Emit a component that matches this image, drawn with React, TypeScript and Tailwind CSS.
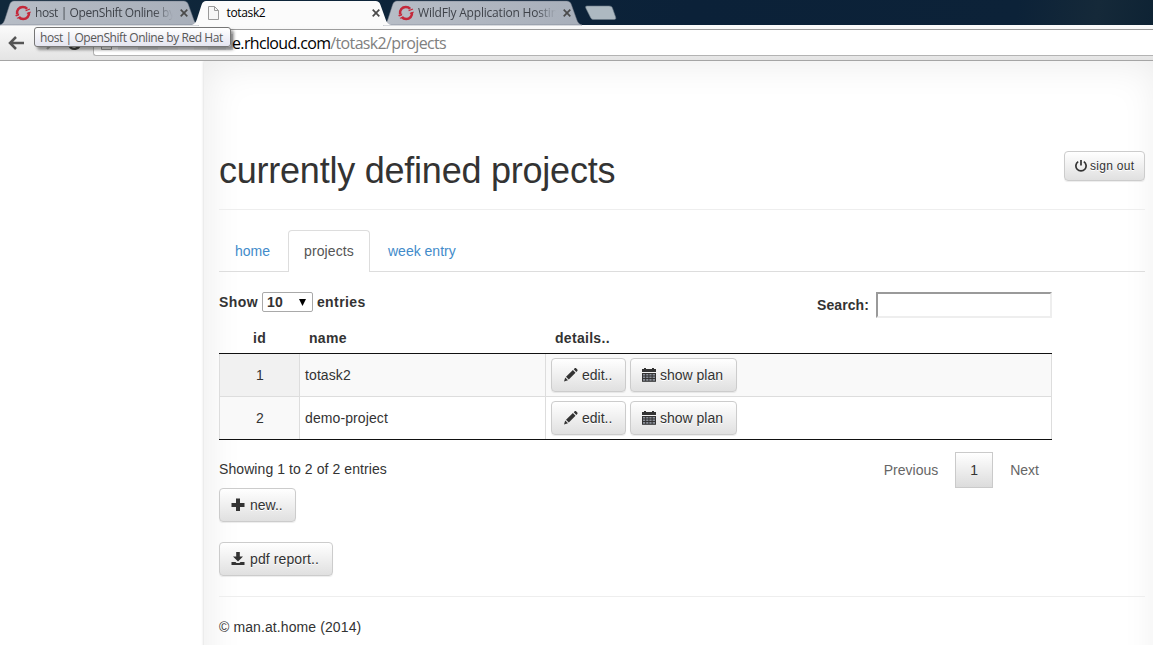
import type { ReactNode } from 'react';

const openShiftIcon = (
  <svg width="16" height="16" viewBox="0 0 16 16" fill="none" stroke="#c4283a" strokeWidth="2.600">
    <path d="M2.100 9.200C1.400 5 4.200 2 7.800 2c1.900 0 3.300.7 4.300 1.900" />
    <path d="M13.900 7.200c.6 3.800-2.200 6.800-5.700 6.800-1.900 0-3.400-.7-4.400-2" />
    <path d="M.2 10.200 4.200 8.600 4 10.400 1 11.600zM10.400 5.200l4.200-1.800.6 1-4.400 1.900zM11.800 8l3.800-1.500.2 1L12 9zM1.600 12.900l3.600-1.500.7.800-3.500 1.600z" fill="#c4283a" stroke="none" />
  </svg>
);

const pageIcon = (
  <svg width="13" height="16" viewBox="0 0 13 16">
    <path d="M1.500 1.500h6l4 4v9h-10z" fill="#f6f6f6" stroke="#9a9a9a" />
    <path d="M7.500 1.500v4h4" fill="none" stroke="#9a9a9a" />
  </svg>
);

type TabProps = { icon: ReactNode; title: string; active?: boolean; tracking: string };

function BrowserTab({ icon, title, active, tracking }: TabProps) {
  return (
    <div className={`relative h-[25px] w-[191.5px] shrink-0 ${active ? 'z-10' : ''}`}>
      <svg className="absolute left-0 top-0" width="206" height="25" viewBox="0 0 206 25" overflow="visible">
        <defs>
          <linearGradient id="idleTab" x1="0" y1="0" x2="1" y2="0">
            <stop offset="0" stopColor="#b7bdc6" />
            <stop offset="1" stopColor="#a8afba" />
          </linearGradient>
        </defs>
        <path
          d="M0 25C3 24 4 22 5 19L9.500 5C10.500 2 12 1 14 1H183.500C186 1 187.500 2 188.500 5L193.500 19C194.500 22 196 24.500 199 25Z"
          fill={active ? '#fbfbfb' : 'url(#idleTab)'}
          stroke={active ? 'none' : '#6f7784'}
          strokeWidth="0.5"
        />
      </svg>
      <div className="relative flex h-[25px] items-center pl-[15px] pt-px">
        <span className="flex w-[20px] shrink-0">{icon}</span>
        <span
          className={`w-[138px] whitespace-nowrap text-[12px] leading-[20px] ${tracking} ${
            active ? 'text-black' : 'text-[#3f434a] [mask-image:linear-gradient(to_right,black_86%,transparent)]'
          }`}
        >
          {title}
        </span>
        <svg className="ml-[7px]" width="8" height="8" viewBox="0 0 8 8" stroke="#4a4a4a" strokeWidth="1.700">
          <path d="M.7.7l6.600 6.600M7.300.7.7 7.300" />
        </svg>
      </div>
    </div>
  );
}

function Browser() {
  return (
    <header className="relative h-[61px] w-full font-['Open_Sans','Noto_Sans',sans-serif]">
      <div className="flex h-[25px] bg-[linear-gradient(100deg,#10283b,#0b2138_60%,#0c2238_88%,#152939_95%,#0e2334)]">
        <BrowserTab icon={openShiftIcon} title="host | OpenShift Online by" tracking="tracking-[-0.4px]" />
        <BrowserTab icon={pageIcon} title="totask2" active tracking="tracking-[-0.35px]" />
        <BrowserTab icon={openShiftIcon} title="WildFly Application Hostin" tracking="tracking-[-0.2px]" />
        <svg className="ml-[9px] mt-[5px]" width="34" height="16" viewBox="0 0 34 16">
          <path d="M3 1h22c2 0 3 .8 3.600 2.400l3 8.600c.6 1.800 0 2.500-1.600 2.500H10c-2 0-3-.8-3.600-2.300L2 3.500C1.300 1.700 1.600 1 3 1z" fill="#adb9c1" stroke="#6c7a86" strokeWidth=".6" />
        </svg>
      </div>
      <div className="flex h-[36px] border-b border-[#a5a5a5] bg-[linear-gradient(#fbfbfb,#e4e4e4)]">
        <div className="flex w-[93px] items-center">
          <svg className="ml-[8px]" width="16" height="14" viewBox="0 0 16 14" fill="none" stroke="#555" strokeWidth="2.500">
            <path d="M8 1 2 7l6 6M2 7h14" />
          </svg>
          <svg className="ml-[16px]" width="44" height="16" viewBox="0 0 44 16" fill="none" stroke="#666" strokeWidth="2.400">
            <path d="M0 8h13M7 2l6 6-6 6" stroke="#aaa" />
            <path d="M39 4a6 6 0 1 0 .5 7" stroke="#444" />
          </svg>
        </div>
        <div className="mt-[4px] flex h-[27px] flex-1 items-center rounded-l-[3px] border border-r-0 border-[#b3b3b3] border-t-[#9c9c9c] bg-white pl-[6px]">
          {pageIcon}
          <svg className="ml-[5px] shrink-0" width="120" height="18" viewBox="0 0 120 18">
            <path d="M0 0h20v16H0zM60 0h16v16H60z" fill="#e9e9ec" />
            <path d="M20 0h20v16H20zM90 0h18v16H90z" fill="#d4d6d8" />
            <path d="M40 0h20v16H40zM76 0h14v16H76zM108 0h7v16h-7z" fill="#e0e0e2" />
          </svg>
          <span className="-ml-[6px] whitespace-nowrap text-[16px] leading-[22px] tracking-[-0.65px] text-black">
            e.rhcloud.com<span className="text-[#808080]">/totask2/projects</span>
          </span>
        </div>
      </div>
      <div className="absolute left-[34px] top-[27px] z-20 flex h-[20px] w-[197px] items-center rounded-[3px] border border-[#767676] bg-[linear-gradient(#fff,#e4e5f0)] pl-[5px] pt-px text-[12px] tracking-[-0.43px] whitespace-nowrap text-[#575757] shadow-[3px_3px_3px_rgba(0,0,0,0.4)]">
        host | OpenShift Online by Red Hat
      </div>
    </header>
  );
}

const icons = {
  pencil: (
    <svg width="14" height="14" viewBox="0 0 14 14" fill="#333">
      <path d="M0 13.500l1.200-4 2.800 2.800zM2 8.700l6.900-6.600 2.600 2.600L4.800 11.500zM9.700 1.300l1-1c.5-.4 1-.4 1.400 0l1.200 1.200c.4.4.4.900 0 1.400l-1 1z" />
    </svg>
  ),
  calendar: (
    <svg width="14" height="14" viewBox="0 0 14 14" fill="#333">
      <path d="M0 1h2V0h2v1h6V0h2v1h2v3H0z" />
      <path d="M.5 5h13v8.500H.5z" fill="#8a8f99" />
      <path d="M0 5h14v1H0zM0 7.500h14v1H0zM0 10h14v1H0zM0 12.800h14v1H0zM0 5h1v8.800H0zM3.200 5h1v8.800h-1zM6.400 5h1v8.800h-1zM9.600 5h1v8.800h-1zM13 5h1v8.800h-1z" />
    </svg>
  ),
  plus: (
    <svg width="14" height="14" viewBox="0 0 14 14" fill="#333">
      <path d="M5 .500h4v4.500h4.500v4H9v4H5V9H.5V5H5z" />
    </svg>
  ),
  save: (
    <svg width="14" height="14" viewBox="0 0 14 14" fill="#333">
      <path d="M5.200 0h3.600v4.500h3.200L7 9.500 2 4.500h3.200zM.5 10h4l1 1h3l1-1h4v3H.5z" />
    </svg>
  ),
  off: (
    <svg width="12" height="12" viewBox="0 0 12 12" fill="none" stroke="#333" strokeWidth="1.700">
      <path d="M3.200 1.600a5.100 5.100 0 1 0 5.600 0M6 0v5.500" />
    </svg>
  ),
};

function Button({ icon, className, children }: { icon: ReactNode; className: string; children: ReactNode }) {
  return (
    <button
      className={`flex shrink-0 items-center whitespace-nowrap rounded-[4px] border border-[#ccc] bg-[linear-gradient(#fff,#e0e0e0)] text-[#333] shadow-[0_1px_1px_rgba(0,0,0,0.075)] [text-shadow:0_1px_0_#fff] ${className}`}
    >
      {icon}
      <span>{children}</span>
    </button>
  );
}

const projects = [
  { id: 1, name: 'totask2', row: 'h-[43px] bg-[#f9f9f9] border-b border-[#ddd]', idBg: 'bg-[#f1f1f1]' },
  { id: 2, name: 'demo-project', row: 'h-[42px] bg-white', idBg: 'bg-[#f9f9f9]' },
];

export default function App() {
  return (
    <div className="h-[645px] w-full overflow-hidden bg-white">
      <Browser />
      <div className="h-[584px] overflow-hidden">
        <main className="ml-[204px] h-[640px] w-[957px] pl-[15px] pr-4 font-['Liberation_Sans',Arial,sans-serif] text-[14px] leading-[20px] text-[#333] shadow-[inset_0_0_40px_#e9e9e9,0_0_3px_#ccc]">
          <div className="flex h-[149px] items-start justify-between border-b border-[#eee] pt-[90px]">
            <h1 className="text-[36px] leading-[40px] tracking-[-0.23px]">currently defined projects</h1>
            <Button icon={icons.off} className="h-[30px] w-[81px] gap-[3px] pl-[10px] text-[12px] tracking-[0.3px]">
              sign out
            </Button>
          </div>

          <nav className="mt-5 flex h-[42px] border-b border-[#ddd] text-[#428bca]">
            <a className="w-[69px] pl-4 pt-[11px]">home</a>
            <a className="h-[42px] w-[82px] rounded-t-[4px] border border-b-0 border-[#ddd] bg-white pl-[15px] pt-[10px] tracking-[0.1px] text-[#555]">
              projects
            </a>
            <a className="pl-[18px] pt-[11px]">week entry</a>
          </nav>

          <section className="w-[833px]">
            <div className="flex h-[66px] items-start justify-between pt-5 font-bold">
              <label className="flex items-center tracking-[0.4px]">
                Show
                <span className="mx-1 flex h-5 w-[51px] items-center justify-between rounded-[2px] border border-[#a9a9a9] bg-white pl-[4px] pr-[6px]">
                  10
                  <svg width="7" height="7" viewBox="0 0 7 7">
                    <path d="M0 0h7L3.500 7z" fill="#000" />
                  </svg>
                </span>
                entries
              </label>
              <label className="flex items-center tracking-[0.1px]">
                Search:
                <input className="ml-[7px] h-[26px] w-[176px] border-2 border-[#eee] border-l-[#9a9a9a] border-t-[#9a9a9a] bg-white" />
              </label>
            </div>

            <div className="-mt-[10px] flex h-[26px] border-b border-[#111] font-bold tracking-[0.3px]">
              <div className="w-[80px] pl-px text-center">id</div>
              <div className="w-[246px] pl-[10px]">name</div>
              <div className="pl-[10px]">details..</div>
            </div>
            <div className="border-b border-[#111]">
              {projects.map((p) => (
                <div key={p.id} className={`flex ${p.row}`}>
                  <div className={`flex w-[80px] items-center justify-center border-l border-[#ddd] pl-px ${p.idBg}`}>{p.id}</div>
                  <div className="flex w-[246px] items-center border-l border-[#ddd] pl-[5px] tracking-[0.1px]">{p.name}</div>
                  <div className="flex flex-1 items-center gap-1 border-x border-[#ddd] pl-[5px]">
                    <Button icon={icons.pencil} className="h-[34px] w-[75px] gap-[4px] pl-[12px]">
                      edit..
                    </Button>
                    <Button icon={icons.calendar} className="h-[34px] w-[107px] gap-[4px] pl-[11px]">
                      show plan
                    </Button>
                  </div>
                </div>
              ))}
            </div>

            <div className="flex h-[48px] justify-between pt-[12px]">
              <span className="pt-[7px] tracking-[0.08px]">Showing 1 to 2 of 2 entries</span>
              <div className="flex h-[36px] items-center pr-[14px] text-[#666]">
                <span>Previous</span>
                <span className="ml-[17px] mr-[17px] flex h-[36px] w-[38px] items-center justify-center border border-[#cacaca] bg-[linear-gradient(#fff,#dcdcdc)] text-[#333]">
                  1
                </span>
                <span className="-mr-px">Next</span>
              </div>
            </div>
          </section>

          <Button icon={icons.plus} className="h-[34px] w-[77px] gap-[5px] pl-[11px]">
            new..
          </Button>
          <Button icon={icons.save} className="mt-5 h-[34px] w-[114px] gap-[5px] pl-[11px] tracking-[0.1px]">
            pdf report..
          </Button>
          <footer className="mt-5 border-t border-[#eee] pt-5 tracking-[0.1px]">© man.at.home (2014)</footer>
        </main>
      </div>
    </div>
  );
}
